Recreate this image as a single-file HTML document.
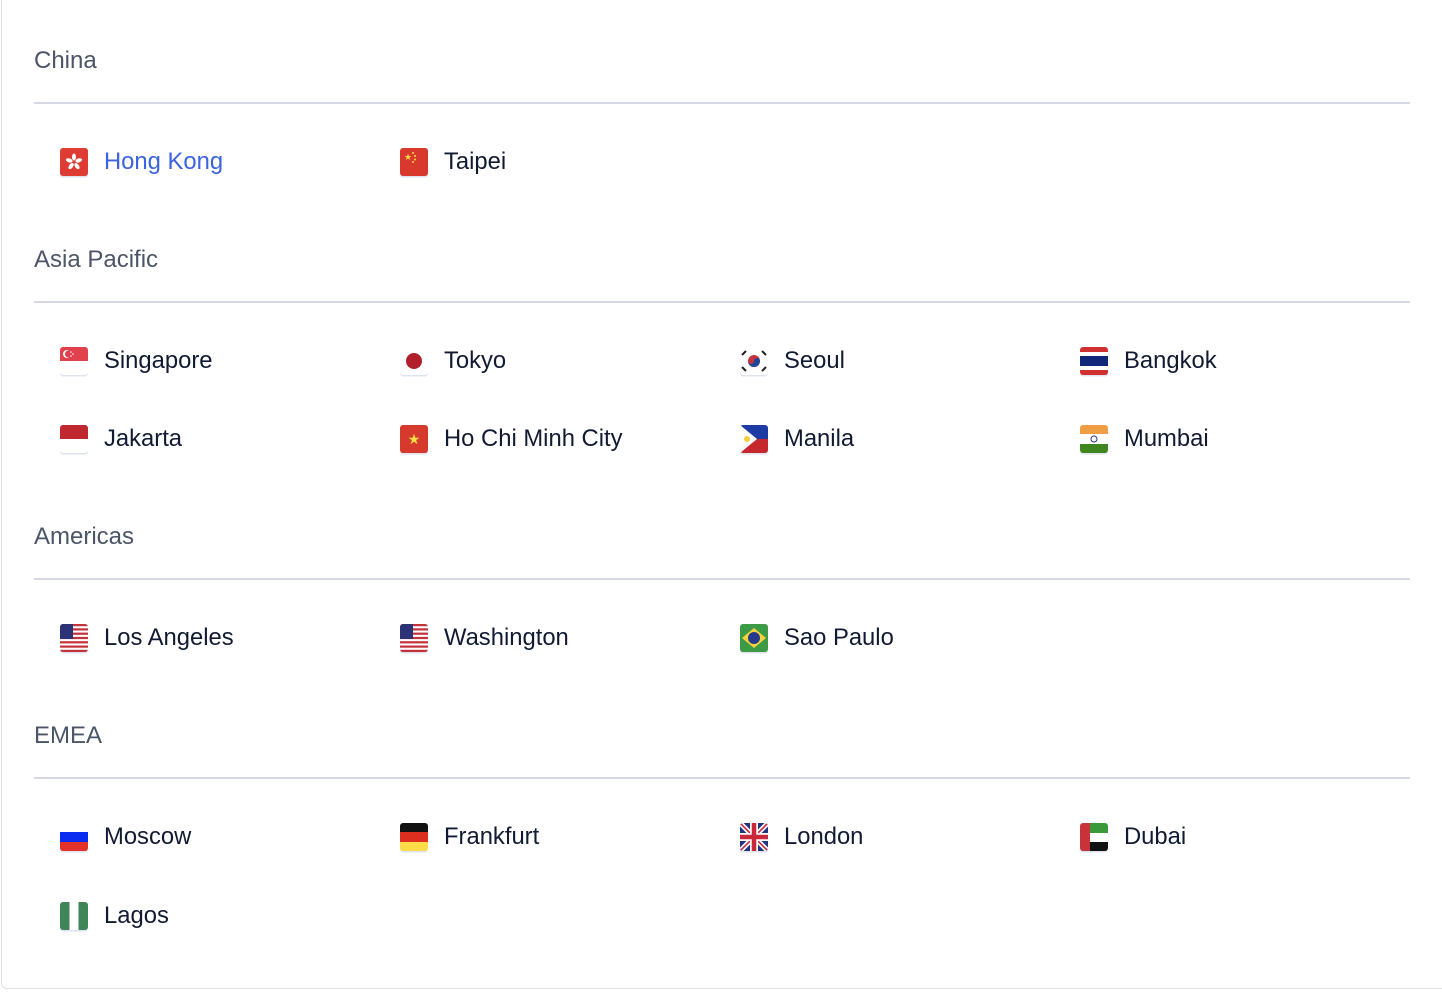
<!DOCTYPE html>
<html><head><meta charset="utf-8"><style>
html,body{margin:0;padding:0;background:#fff;}
body{width:1442px;height:992px;position:relative;overflow:hidden;font-family:"Liberation Sans",Arial,sans-serif;}
.frame{position:absolute;left:1px;top:-6px;width:1446px;height:995px;border:1px solid #e2e2e2;border-radius:6px;box-sizing:border-box;}
.h{position:absolute;left:34px;font-size:24px;color:#4b5568;line-height:26px;}
.d{position:absolute;left:34px;width:1376px;height:2px;background:#d6d8e7;}
.it{position:absolute;height:28px;line-height:28px;font-size:23.8px;color:#111a33;}
.it span{position:absolute;left:44px;top:0;white-space:nowrap;}
.it svg{position:absolute;left:0;top:0;width:28px;height:28px;border-radius:3px;box-shadow:0 1.5px 0 #dfe2ef;}
</style></head><body>
<div class="frame"></div>

<div class="h" style="top:48px">China</div>
<div class="d" style="top:102px"></div>
<div class="it" style="left:60px;top:148px"><svg viewBox="0 0 28 28"><rect width="28" height="28" fill="#de3b34"/><g fill="#fff"><ellipse cx="14" cy="9" rx="2" ry="3.5"/><ellipse cx="14" cy="9" rx="2" ry="3.5" transform="rotate(72 14 14)"/><ellipse cx="14" cy="9" rx="2" ry="3.5" transform="rotate(144 14 14)"/><ellipse cx="14" cy="9" rx="2" ry="3.5" transform="rotate(216 14 14)"/><ellipse cx="14" cy="9" rx="2" ry="3.5" transform="rotate(288 14 14)"/></g></svg><span style="color:#3b63e0">Hong Kong</span></div>
<div class="it" style="left:400px;top:148px"><svg viewBox="0 0 28 28"><rect width="28" height="28" fill="#d9382c"/><text x="4" y="12" font-size="9" fill="#f7d84a">★</text><g fill="#f7d84a"><circle cx="13" cy="5" r="1"/><circle cx="15" cy="8" r="1"/><circle cx="15" cy="11.5" r="1"/><circle cx="13" cy="14" r="1"/></g></svg><span>Taipei</span></div>

<div class="h" style="top:247px">Asia Pacific</div>
<div class="d" style="top:301px"></div>
<div class="it" style="left:60px;top:347px"><svg viewBox="0 0 28 28"><rect width="28" height="28" fill="#fff"/><rect width="28" height="14" fill="#e1404d"/><circle cx="7" cy="7" r="4" fill="#fff"/><circle cx="8.5" cy="7" r="3.5" fill="#e1404d"/><g fill="#fff"><circle cx="11" cy="5" r=".8"/><circle cx="13" cy="7" r=".8"/><circle cx="11" cy="9" r=".8"/></g></svg><span>Singapore</span></div>
<div class="it" style="left:400px;top:347px"><svg viewBox="0 0 28 28"><rect width="28" height="28" fill="#fff"/><circle cx="14" cy="14" r="8" fill="#b11f2c"/></svg><span>Tokyo</span></div>
<div class="it" style="left:740px;top:347px"><svg viewBox="0 0 28 28"><rect width="28" height="28" fill="#fff"/><circle cx="14" cy="14" r="6" fill="#c8323c"/><path d="M8 14a6 6 0 0 0 12 0a3 3 0 0 0-6 0a3 3 0 0 1-6 0" fill="#1f4596"/><g stroke="#222" stroke-width="2"><path d="M2 8l4-4M22 4l4 4M2 20l4 4M22 24l4-4"/></g></svg><span>Seoul</span></div>
<div class="it" style="left:1080px;top:347px"><svg viewBox="0 0 28 28"><rect width="28" height="28" fill="#d0302f"/><rect y="5" width="28" height="18" fill="#fff"/><rect y="9" width="28" height="10" fill="#12277a"/></svg><span>Bangkok</span></div>

<div class="it" style="left:60px;top:425px"><svg viewBox="0 0 28 28"><rect width="28" height="28" fill="#fff"/><rect width="28" height="14" fill="#c0282f"/></svg><span>Jakarta</span></div>
<div class="it" style="left:400px;top:425px"><svg viewBox="0 0 28 28"><rect width="28" height="28" fill="#d63a2c"/><text x="14" y="19" font-size="14" text-anchor="middle" fill="#f8e047">★</text></svg><span>Ho Chi Minh City</span></div>
<div class="it" style="left:740px;top:425px"><svg viewBox="0 0 28 28"><rect width="28" height="14" fill="#1c3ba3"/><rect y="14" width="28" height="14" fill="#c5282f"/><path d="M0 0L17 14L0 28Z" fill="#fff"/><circle cx="7" cy="14" r="3" fill="#f6cd3e"/></svg><span>Manila</span></div>
<div class="it" style="left:1080px;top:425px"><svg viewBox="0 0 28 28"><rect width="28" height="28" fill="#fff"/><rect width="28" height="9" fill="#f09e45"/><rect y="19" width="28" height="9" fill="#3f861f"/><circle cx="14" cy="14" r="3" fill="none" stroke="#263682" stroke-width="1"/></svg><span>Mumbai</span></div>

<div class="h" style="top:524px">Americas</div>
<div class="d" style="top:578px"></div>
<div class="it" style="left:60px;top:624px"><svg viewBox="0 0 28 28"><rect width="28" height="28" fill="#fff"/><g fill="#c2323b"><rect y="0" width="28" height="2.2"/><rect y="4.3" width="28" height="2.2"/><rect y="8.6" width="28" height="2.2"/><rect y="12.9" width="28" height="2.2"/><rect y="17.2" width="28" height="2.2"/><rect y="21.5" width="28" height="2.2"/><rect y="25.8" width="28" height="2.2"/></g><rect width="13" height="15" fill="#2c3477"/></svg><span>Los Angeles</span></div>
<div class="it" style="left:400px;top:624px"><svg viewBox="0 0 28 28"><rect width="28" height="28" fill="#fff"/><g fill="#c2323b"><rect y="0" width="28" height="2.2"/><rect y="4.3" width="28" height="2.2"/><rect y="8.6" width="28" height="2.2"/><rect y="12.9" width="28" height="2.2"/><rect y="17.2" width="28" height="2.2"/><rect y="21.5" width="28" height="2.2"/><rect y="25.8" width="28" height="2.2"/></g><rect width="13" height="15" fill="#2c3477"/></svg><span>Washington</span></div>
<div class="it" style="left:740px;top:624px"><svg viewBox="0 0 28 28"><rect width="28" height="28" fill="#3d9a45"/><path d="M14 4L26 14L14 24L2 14Z" fill="#f6d33c"/><circle cx="14" cy="14" r="6" fill="#263a8c"/></svg><span>Sao Paulo</span></div>

<div class="h" style="top:723px">EMEA</div>
<div class="d" style="top:777px"></div>
<div class="it" style="left:60px;top:823px"><svg viewBox="0 0 28 28"><rect width="28" height="28" fill="#fff"/><rect y="9" width="28" height="10" fill="#0a2cf0"/><rect y="19" width="28" height="9" fill="#e3322a"/></svg><span>Moscow</span></div>
<div class="it" style="left:400px;top:823px"><svg viewBox="0 0 28 28"><rect width="28" height="10" fill="#111"/><rect y="9" width="28" height="10" fill="#dc2f1f"/><rect y="19" width="28" height="9" fill="#fcdd47"/></svg><span>Frankfurt</span></div>
<div class="it" style="left:740px;top:823px"><svg viewBox="0 0 28 28"><rect width="28" height="28" fill="#1f3582"/><path d="M0 0L28 28M28 0L0 28" stroke="#fff" stroke-width="5"/><path d="M0 0L28 28M28 0L0 28" stroke="#c8283a" stroke-width="1.6"/><path d="M14 0V28M0 14H28" stroke="#fff" stroke-width="8"/><path d="M14 0V28M0 14H28" stroke="#c8283a" stroke-width="4.5"/></svg><span>London</span></div>
<div class="it" style="left:1080px;top:823px"><svg viewBox="0 0 28 28"><rect width="28" height="28" fill="#fff"/><rect x="10" width="18" height="10" fill="#3a9a3a"/><rect x="10" y="19" width="18" height="9" fill="#111"/><rect width="10" height="28" fill="#c8323a"/></svg><span>Dubai</span></div>

<div class="it" style="left:60px;top:902px"><svg viewBox="0 0 28 28"><rect width="28" height="28" fill="#fff"/><rect width="9.5" height="28" fill="#3f855a"/><rect x="18.5" width="9.5" height="28" fill="#3f855a"/></svg><span>Lagos</span></div>
</body></html>
